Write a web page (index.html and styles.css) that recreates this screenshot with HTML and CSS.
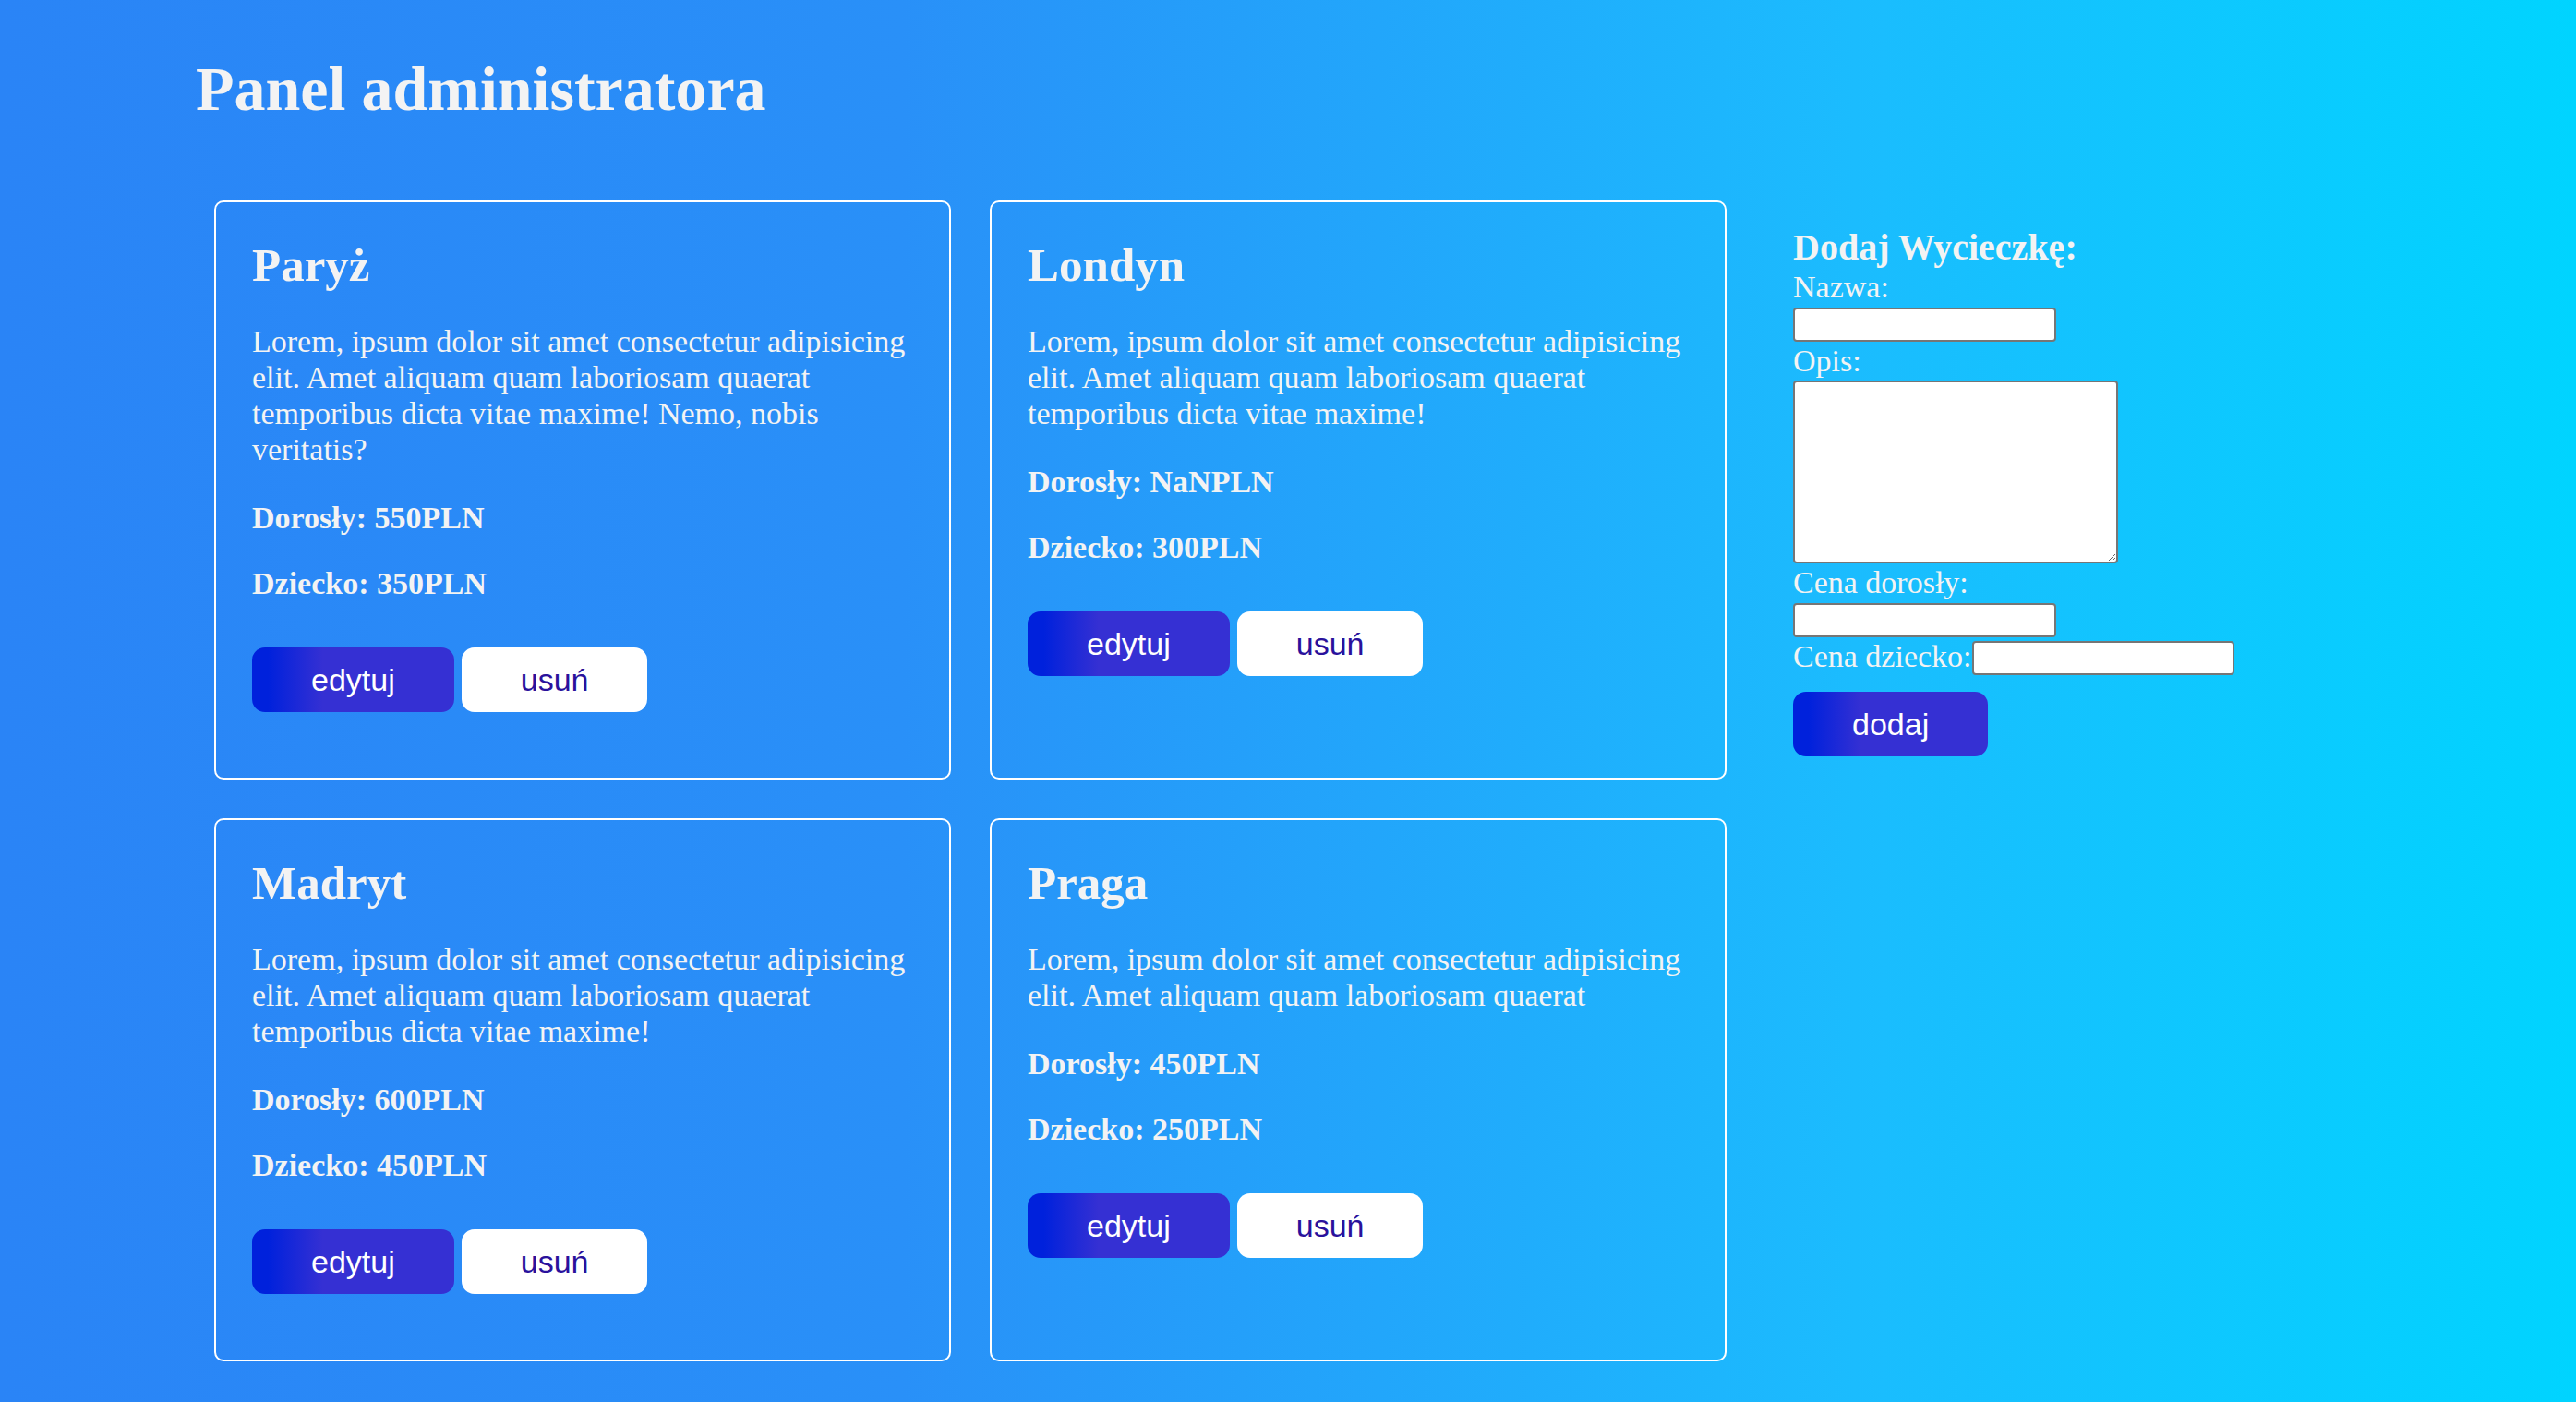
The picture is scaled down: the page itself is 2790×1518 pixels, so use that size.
FILE: index.html
```html
<!DOCTYPE html>
<html lang="pl">
<head>
<meta charset="utf-8">
<title>Panel administratora</title>
<link rel="stylesheet" href="styles.css">
</head>
<body>
<div class="page">
  <h1 class="page-title">Panel administratora</h1>
  <div class="layout">
    <div class="cards">
      <div class="card">
        <h2 class="card-title">Paryż</h2>
        <p class="card-desc">Lorem, ipsum dolor sit amet consectetur adipisicing elit. Amet aliquam quam laboriosam quaerat temporibus dicta vitae maxime! Nemo, nobis veritatis?</p>
        <p class="price">Dorosły: 550PLN</p>
        <p class="price price-child">Dziecko: 350PLN</p>
        <div class="actions">
          <button class="btn btn-primary">edytuj</button>
          <button class="btn btn-light">usuń</button>
        </div>
      </div>
      <div class="card">
        <h2 class="card-title">Londyn</h2>
        <p class="card-desc">Lorem, ipsum dolor sit amet consectetur adipisicing elit. Amet aliquam quam laboriosam quaerat temporibus dicta vitae maxime!</p>
        <p class="price">Dorosły: NaNPLN</p>
        <p class="price price-child">Dziecko: 300PLN</p>
        <div class="actions">
          <button class="btn btn-primary">edytuj</button>
          <button class="btn btn-light">usuń</button>
        </div>
      </div>
      <div class="card">
        <h2 class="card-title">Madryt</h2>
        <p class="card-desc">Lorem, ipsum dolor sit amet consectetur adipisicing elit. Amet aliquam quam laboriosam quaerat temporibus dicta vitae maxime!</p>
        <p class="price">Dorosły: 600PLN</p>
        <p class="price price-child">Dziecko: 450PLN</p>
        <div class="actions">
          <button class="btn btn-primary">edytuj</button>
          <button class="btn btn-light">usuń</button>
        </div>
      </div>
      <div class="card">
        <h2 class="card-title">Praga</h2>
        <p class="card-desc">Lorem, ipsum dolor sit amet consectetur adipisicing elit. Amet aliquam quam laboriosam quaerat</p>
        <p class="price">Dorosły: 450PLN</p>
        <p class="price price-child">Dziecko: 250PLN</p>
        <div class="actions">
          <button class="btn btn-primary">edytuj</button>
          <button class="btn btn-light">usuń</button>
        </div>
      </div>
    </div>
    <form class="add-form">
      <h3 class="form-title">Dodaj Wycieczkę:</h3>
      <label class="field-label" for="nazwa">Nazwa:</label>
      <input class="field-input" id="nazwa" type="text">
      <label class="field-label field-label-gap" for="opis">Opis:</label>
      <textarea class="field-area" id="opis"></textarea>
      <label class="field-label field-label-gap" for="dorosly">Cena dorosły:</label>
      <input class="field-input" id="dorosly" type="text">
      <div class="field-row">
        <label class="field-label-inline" for="dziecko">Cena dziecko:</label>
        <input class="field-input field-input-inline" id="dziecko" type="text">
      </div>
      <button type="button" class="btn btn-primary btn-add">dodaj</button>
    </form>
  </div>
</div>
</body>
</html>
```

FILE: styles.css
```css
* {
  box-sizing: border-box;
}

html {
  min-height: 100%;
}

body {
  margin: 0;
  min-height: 100vh;
  background: linear-gradient(90deg, #2a84f6 0%, #2990f8 35%, #1bbcfe 72%, #00d4ff 100%);
  font-family: "Liberation Serif", "Times New Roman", serif;
  font-size: 34px;
  color: #f3f3f3;
}

.page {
  padding: 57px 0 40px 212px;
}

.page-title {
  margin: 0;
  font-size: 68px;
  line-height: 78px;
  font-weight: bold;
}

.layout {
  display: flex;
  align-items: flex-start;
  margin: 82px 0 0 20px;
}

.cards {
  display: grid;
  grid-template-columns: 798px 798px;
  gap: 42px;
}

.card {
  display: flex;
  flex-direction: column;
  align-items: flex-start;
  border: 2px solid #ffffff;
  border-radius: 10px;
  padding: 39px 39px 71px 39px;
}

.card-title {
  margin: 0;
  font-size: 51px;
  line-height: 58px;
  font-weight: bold;
}

.card-desc {
  margin: 34px 0 0;
  line-height: 39px;
}

.price {
  margin: 35px 0 0;
  line-height: 39px;
  font-weight: bold;
}

.price-child {
  margin-top: 32px;
}

.actions {
  display: flex;
  gap: 8px;
  margin-top: 50px;
}

.btn {
  height: 70px;
  padding: 0 64px;
  border: none;
  border-radius: 14px;
  font-family: "Liberation Sans", Arial, sans-serif;
  font-size: 34px;
  line-height: 39px;
  cursor: pointer;
}

.btn-primary {
  background: linear-gradient(90deg, #0021dc 8%, #3530d3 35%);
  color: #ffffff;
}

.btn-light {
  background: #ffffff;
  color: #2a119c;
}

.add-form {
  display: flex;
  flex-direction: column;
  align-items: flex-start;
  margin-left: 72px;
}

.form-title {
  margin: 28px 0 0;
  font-size: 40px;
  line-height: 46px;
  font-weight: bold;
}

.field-label {
  display: block;
  line-height: 39px;
}

.field-label-gap {
  margin-top: 1px;
}

.field-input {
  display: block;
  width: 285px;
  height: 37px;
  margin-top: 3px;
  border: 2px solid #767676;
  border-radius: 4px;
  background: #ffffff;
  padding: 0 4px;
}

.field-area {
  display: block;
  width: 352px;
  height: 198px;
  margin-top: 2px;
  border: 2px solid #767676;
  border-radius: 4px;
  background: #ffffff;
}

.field-row {
  display: flex;
  align-items: flex-start;
  margin-top: 1px;
}

.field-label-inline {
  line-height: 39px;
}

.field-input-inline {
  width: 284px;
}

.btn-add {
  margin-top: 18px;
}
```
